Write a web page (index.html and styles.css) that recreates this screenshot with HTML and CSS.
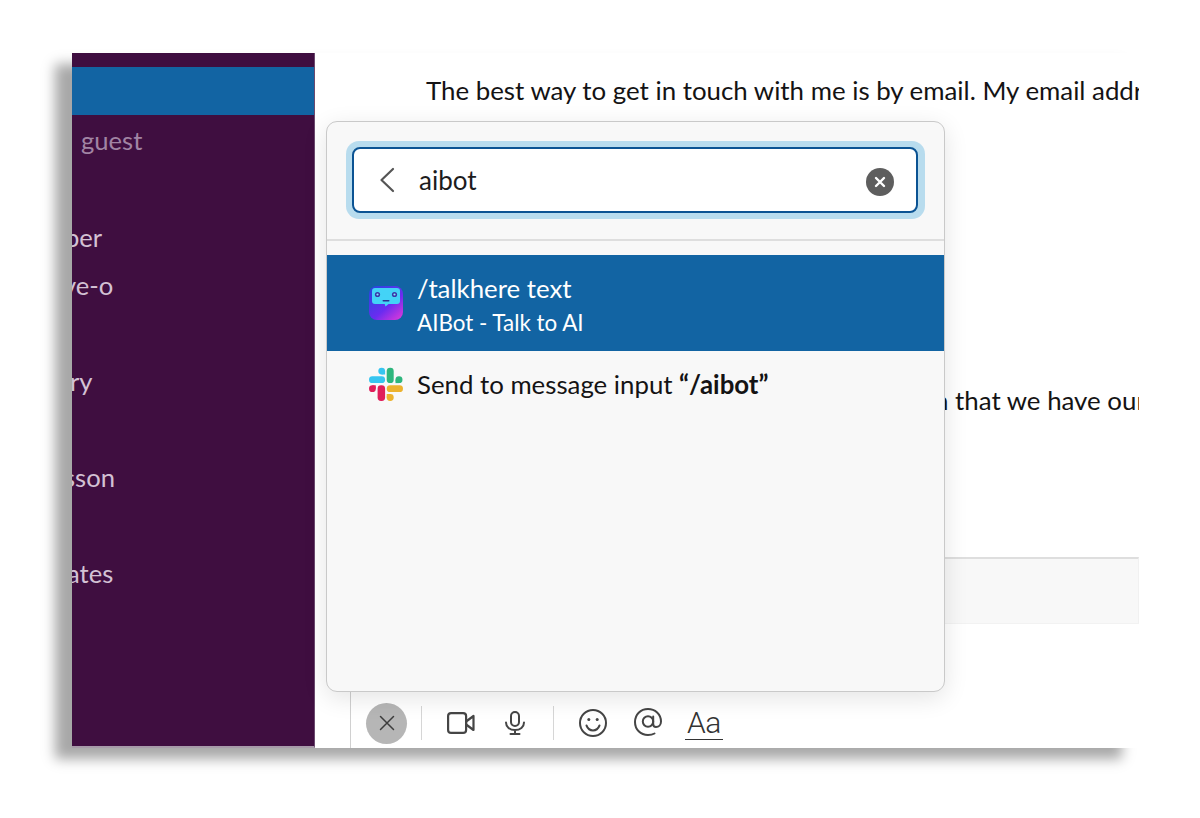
FILE: index.html
```html
<!DOCTYPE html>
<html lang="en">
<head>
<meta charset="utf-8">
<title>AIBot slash command</title>
<link rel="stylesheet" href="styles.css">
</head>
<body>
<div class="window">
  <aside class="sidebar">
    <div class="row row-active"></div>
    <div class="row row-muted"><span class="guest">guest</span></div>
    <div class="row"></div>
    <div class="row row-ber">ber</div>
    <div class="row row-veo">ve-o</div>
    <div class="row"></div>
    <div class="row row-ry">ry</div>
    <div class="row"></div>
    <div class="row row-sson">sson</div>
    <div class="row"></div>
    <div class="row row-ates">ates</div>
  </aside>
  <main class="main">
    <p class="msg msg-one">The best way to get in touch with me is by email. My email addr</p>
    <p class="msg msg-two">n that we have our</p>
    <div class="composer-box"></div>
    <div class="toolbar">
      <span class="close-btn">
        <svg width="18" height="18" viewBox="0 0 18 18" fill="none" stroke="#3d3d3d" stroke-width="1.5" stroke-linecap="round"><path d="M2.500 2.500l13 13M15.500 2.500l-13 13"/></svg>
      </span>
      <span class="tool-sep"></span>
      <span class="tool tool-video">
        <svg width="28" height="22" viewBox="0 0 28 22" fill="none" stroke="#454545" stroke-width="2.200" stroke-linejoin="round"><rect x="1.100" y="1.100" width="18" height="19.800" rx="3"/><path d="M19.100 9.500l7.400-5.500v14l-7.400-5.500z"/></svg>
      </span>
      <span class="tool tool-mic">
        <svg width="22" height="24" viewBox="0 0 22 24" fill="none" stroke="#454545" stroke-width="2" stroke-linecap="round"><rect x="7" y="1" width="8" height="14" rx="4"/><path d="M2 11.500c0 4.500 3.800 7.500 9 7.500s9-3 9-7.500M11 19v4M6.500 23h9"/></svg>
      </span>
      <span class="tool-sep tool-sep-two"></span>
      <span class="tool tool-emoji">
        <svg width="28" height="28" viewBox="0 0 28 28" fill="none" stroke="#454545" stroke-width="2" stroke-linecap="round"><circle cx="14" cy="14" r="13"/><path d="M7.500 16.500c1.300 3.200 3.600 5 6.500 5s5.200-1.800 6.500-5"/><circle cx="9.800" cy="10.500" r="1.500" fill="#454545" stroke="none"/><circle cx="18.200" cy="10.500" r="1.500" fill="#454545" stroke="none"/></svg>
      </span>
      <span class="tool tool-at">
        <svg width="28" height="28" viewBox="0 0 28 28" fill="none" stroke="#454545" stroke-width="2" stroke-linecap="round"><circle cx="14" cy="13.500" r="5.200"/><path d="M19.200 8.500v7.500c0 2 1.200 3 2.800 3 2.600 0 5-2 5-5.500C27 6 21 1 14 1 6.500 1 1 6.500 1 14s5.500 13 13 13c2.600 0 4.700-.5 6.500-1.500"/></svg>
      </span>
      <span class="tool-aa">Aa</span>
    </div>
    <section class="switcher">
      <div class="search-ring">
        <div class="search">
          <svg class="back" width="16" height="26" viewBox="0 0 16 26" fill="none" stroke="#555" stroke-width="2.200" stroke-linecap="round" stroke-linejoin="round"><path d="M14 2L2.500 13 14 24"/></svg>
          <span class="query">aibot</span>
          <span class="clear">
            <svg width="12" height="12" viewBox="0 0 12 12" fill="none" stroke="#fff" stroke-width="2.400" stroke-linecap="round"><path d="M2 2l8 8M10 2l-8 8"/></svg>
          </span>
        </div>
      </div>
      <div class="results">
        <div class="result result-on">
          <svg class="result-icon" width="36" height="38" viewBox="0 0 36 38">
            <defs>
              <linearGradient id="botbg" x1="0.150" y1="0" x2="1" y2="1">
                <stop offset="0" stop-color="#2a45e0"/>
                <stop offset="0.550" stop-color="#6a2cf0"/>
                <stop offset="1" stop-color="#e63ad8"/>
              </linearGradient>
            </defs>
            <rect x="1" y="2" width="34" height="34" rx="8" fill="url(#botbg)"/>
            <path d="M7 4h22a3 3 0 0 1 3 3v10a3 3 0 0 1-3 3H20.500l-3 2.500-.8-2.500H7a3 3 0 0 1-3-3V7a3 3 0 0 1 3-3z" fill="#43d3f7"/>
            <circle cx="9.500" cy="10.500" r="2.600" fill="#3a36a8"/>
            <circle cx="26.500" cy="10.500" r="2.600" fill="#3a36a8"/>
            <circle cx="9.500" cy="10.500" r="1.100" fill="#7fe6fb"/>
            <circle cx="26.500" cy="10.500" r="1.100" fill="#7fe6fb"/>
            <rect x="14.500" y="16" width="7" height="1.500" rx="0.750" fill="#2b2f93"/>
          </svg>
          <div class="result-text">
            <div class="result-title">/talkhere text</div>
            <div class="result-sub">AIBot - Talk to AI</div>
          </div>
        </div>
        <div class="result result-plain">
          <svg class="result-icon" width="36" height="36" viewBox="0 0 36 36">
            <rect x="10.300" y="1.700" width="6.800" height="6.800" rx="3.400" fill="#36c5f0"/>
            <rect x="13.700" y="5.100" width="3.400" height="3.400" fill="#36c5f0"/>
            <rect x="1" y="10.300" width="16.100" height="6.800" rx="3.400" fill="#36c5f0"/>
            <rect x="18.700" y="1.700" width="7" height="15.400" rx="3.400" fill="#2eb67d"/>
            <rect x="27.500" y="10.300" width="7" height="6.800" rx="3.400" fill="#2eb67d"/>
            <rect x="27.500" y="13.700" width="3.400" height="3.400" fill="#2eb67d"/>
            <rect x="1" y="19.300" width="6.800" height="6.800" rx="3.400" fill="#e01e5a"/>
            <rect x="4.400" y="19.300" width="3.400" height="3.400" fill="#e01e5a"/>
            <rect x="9.600" y="19.300" width="7.500" height="15.700" rx="3.400" fill="#e01e5a"/>
            <rect x="18.700" y="19.300" width="16.300" height="6.800" rx="3.400" fill="#ecb22e"/>
            <rect x="18.700" y="28" width="7" height="7" rx="3.400" fill="#ecb22e"/>
            <rect x="18.700" y="28" width="3.400" height="3.400" fill="#ecb22e"/>
          </svg>
          <div class="result-title">Send to message input <b>“/aibot”</b></div>
        </div>
      </div>
    </section>
  </main>
</div>
</body>
</html>
```
FILE: styles.css
```css
* { box-sizing: border-box; }

html, body { height: 100%; }

body {
  margin: 0;
  padding: 53px 61px 70px 72px;
  background: #fff;
  font-family: Lato, "Open Sans", sans-serif;
  color: #1d1c1d;
  overflow: hidden;
}

.window {
  display: flex;
  width: 1067px;
  height: 695px;
  background: #fff;
  box-shadow: -17px 11px 12px 0 #a8a8a8;
  position: relative;
}

.sidebar {
  flex: 0 0 243px;
  padding-top: 14px;
  background: #3f0e40;
  border-right: 1px solid #6b4a6e;
  border-bottom: 2px solid #a79aa9;
  overflow: hidden;
}

.row {
  height: 48px;
  padding-top: 3px;
  display: flex;
  align-items: center;
  white-space: nowrap;
  font-size: 25.6px;
  line-height: 30px;
  color: #d3c1d4;
}

.row-ber { text-indent: -7px; }
.row-veo { text-indent: -9px; }
.row-ry { text-indent: -2px; }
.row-sson { text-indent: -8px; }
.row-ates { text-indent: -5px; }

.row-active { background: #1264a3; }

.guest {
  margin-left: 9px;
  color: #a184a4;
  position: relative;
  top: -1px;
}

.main {
  flex: 0 0 824px;
  min-width: 0;
  position: relative;
  background: #fff;
}

.msg {
  margin: 0;
  font-size: 25.85px;
  line-height: 34px;
  color: #141314;
  white-space: nowrap;
  overflow: hidden;
}

.msg-one {
  margin-top: 20px;
  padding-left: 111px;
}

.msg-two {
  margin-top: 276px;
  padding-left: 619px;
}

.composer-box {
  margin-top: 140px;
  margin-left: 12px;
  height: 67px;
  background: #f8f8f8;
  border-top: 2px solid #dedede;
  border-bottom: 1px solid #f2f2f2;
  border-right: 1px solid #f1f1f1;
}

.toolbar {
  position: absolute;
  left: 35px;
  right: 0;
  bottom: 0;
  height: 58px;
  padding: 4px 0 0 15px;
  display: flex;
  align-items: center;
  border-left: 1px solid #d0d0d0;
}

.close-btn {
  width: 41px;
  height: 41px;
  border-radius: 50%;
  background: #b6b6b6;
  display: flex;
  align-items: center;
  justify-content: center;
  position: relative;
  top: 2px;
}

.tool-sep {
  width: 1px;
  height: 34px;
  margin-left: 14px;
  background: #d6d6d6;
  position: relative;
  top: 2px;
}

.tool {
  display: flex;
  position: relative;
  top: 2px;
}

.tool-video { margin-left: 25px; }
.tool-mic { margin-left: 29px; }
.tool-sep-two { margin-left: 27px; }
.tool-emoji { margin-left: 25px; }
.tool-at { margin-left: 27px; top: 1px; }

.tool-aa {
  margin-left: 23px;
  padding: 0 2px;
  font-family: Roboto, sans-serif;
  font-weight: 300;
  font-size: 30px;
  line-height: 33px;
  color: #333;
  border-bottom: 1px solid #333;
  letter-spacing: -0.5px;
  position: relative;
  top: 2px;
}

.switcher {
  position: absolute;
  left: 11px;
  top: 68px;
  width: 619px;
  height: 571px;
  padding-top: 19px;
  background: #f8f8f8;
  border: 1px solid #c9c9c9;
  border-radius: 11px;
  box-shadow: 0 6px 24px rgba(0, 0, 0, 0.11);
  display: flex;
  flex-direction: column;
}

.search-ring {
  margin: 0 19px;
  height: 78px;
  padding: 6px 7px 6px 6px;
  border-radius: 13px;
  background: #b8dcee;
}

.search {
  height: 66px;
  display: flex;
  align-items: center;
  padding: 0 23px 0 25px;
  background: #fff;
  border: 2px solid #0b5393;
  border-radius: 8px;
}

.back { flex: none; }

.query {
  margin-left: 24px;
  font-size: 26px;
  color: #1d1c1d;
  flex: 1 1 auto;
}

.clear {
  width: 28px;
  height: 28px;
  border-radius: 50%;
  background: #5e5e5e;
  display: flex;
  align-items: center;
  justify-content: center;
  position: relative;
  top: 2px;
  left: 1px;
}

.results {
  margin-top: 20px;
  padding-top: 14px;
  border-top: 2px solid #dedede;
}

.result {
  display: flex;
  align-items: center;
  padding-left: 41px;
}

.result-on {
  height: 96px;
  background: #1264a3;
  color: #fff;
}

.result-plain {
  height: 66px;
  color: #141314;
}

.result-icon {
  flex: none;
  margin-right: 13px;
}

.result-title {
  font-size: 25.8px;
  line-height: 34px;
}

.result-title b { font-weight: 700; }

.result-sub {
  font-size: 22.4px;
  line-height: 30px;
  position: relative;
  top: 3px;
}
```
